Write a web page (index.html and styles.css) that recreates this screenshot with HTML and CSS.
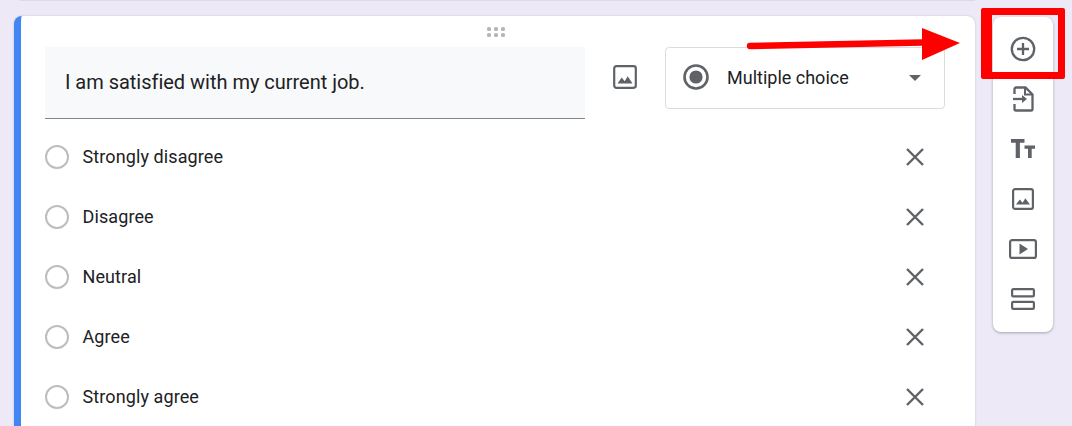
FILE: index.html
```html
<!DOCTYPE html>
<html lang="en">
<head>
<meta charset="utf-8">
<title>Form editor</title>
<link rel="stylesheet" href="styles.css">
</head>
<body>
<div class="prev-card"></div>
<main class="editor">
  <section class="card">
    <div class="drag">
      <svg width="20" height="12" viewBox="0 0 20 12"><g fill="#b4b6b9"><rect x="1" y="1" width="4" height="4" rx="1.5"/><rect x="8" y="1" width="4" height="4" rx="1.5"/><rect x="15" y="1" width="4" height="4" rx="1.5"/><rect x="1" y="7" width="4" height="4" rx="1.5"/><rect x="8" y="7" width="4" height="4" rx="1.5"/><rect x="15" y="7" width="4" height="4" rx="1.5"/></g></svg>
    </div>
    <div class="head">
      <div class="question">I am satisfied with my current job.</div>
      <div class="q-image">
        <svg width="24" height="24" viewBox="0 0 24 24"><rect x="1.2" y="1.2" width="21.6" height="21.6" rx="2.2" fill="none" stroke="#5f6368" stroke-width="2.2"/><path d="M4.500 18.500l4.200-6 3 3.700 3-5 4.800 7.300z" fill="#5f6368"/></svg>
      </div>
      <div class="type">
        <svg class="type-radio" width="26" height="26" viewBox="0 0 26 26"><circle cx="13" cy="13" r="11.5" fill="none" stroke="#5f6368" stroke-width="2.6"/><circle cx="13" cy="13" r="6.6" fill="#5f6368"/></svg>
        <span class="type-label">Multiple choice</span>
        <span class="caret"></span>
      </div>
    </div>
    <ul class="options">
      <li class="option"><span class="radio"></span><span class="label">Strongly disagree</span><svg class="close" width="20" height="20" viewBox="0 0 20 20"><path d="M2 2l16 16M18 2L2 18" stroke="#5f6368" stroke-width="2.4" fill="none"/></svg></li>
      <li class="option"><span class="radio"></span><span class="label">Disagree</span><svg class="close" width="20" height="20" viewBox="0 0 20 20"><path d="M2 2l16 16M18 2L2 18" stroke="#5f6368" stroke-width="2.4" fill="none"/></svg></li>
      <li class="option"><span class="radio"></span><span class="label">Neutral</span><svg class="close" width="20" height="20" viewBox="0 0 20 20"><path d="M2 2l16 16M18 2L2 18" stroke="#5f6368" stroke-width="2.4" fill="none"/></svg></li>
      <li class="option"><span class="radio"></span><span class="label">Agree</span><svg class="close" width="20" height="20" viewBox="0 0 20 20"><path d="M2 2l16 16M18 2L2 18" stroke="#5f6368" stroke-width="2.4" fill="none"/></svg></li>
      <li class="option"><span class="radio"></span><span class="label">Strongly agree</span><svg class="close" width="20" height="20" viewBox="0 0 20 20"><path d="M2 2l16 16M18 2L2 18" stroke="#5f6368" stroke-width="2.4" fill="none"/></svg></li>
    </ul>
  </section>
  <aside class="toolbar">
    <div class="tool"><svg width="26" height="26" viewBox="0 0 26 26"><circle cx="13" cy="13" r="11.2" fill="none" stroke="#5f6368" stroke-width="2.3"/><path d="M13 7v12M7 13h12" stroke="#5f6368" stroke-width="2.3" fill="none"/></svg></div>
    <div class="tool"><svg width="26" height="26" viewBox="0 0 26 26"><path d="M4.500 8V3a1.500 1.500 0 0 1 1.500-1.500h9.500l7 7V23a1.500 1.500 0 0 1-1.500 1.500H6A1.500 1.500 0 0 1 4.500 23v-5" fill="none" stroke="#5f6368" stroke-width="2.300"/><path d="M15 2v6.500h7" fill="none" stroke="#5f6368" stroke-width="2"/><path d="M3 13h10" stroke="#5f6368" stroke-width="2.300" fill="none"/><path d="M12 9l5 4-5 4z" fill="#5f6368"/></svg></div>
    <div class="tool"><svg width="26" height="26" viewBox="0 0 26 26"><path d="M1 3h13.500v3.800h-4.600V22H5.700V6.800H1zM14.500 9.500H25v3.300h-3.300V22h-3.700v-9.200h-3.500z" fill="#5f6368"/></svg></div>
    <div class="tool"><svg width="24" height="24" viewBox="0 0 24 24"><rect x="2.100" y="2.100" width="19.800" height="19.800" rx="2" fill="none" stroke="#5f6368" stroke-width="2.200"/><path d="M5 17.500l3.800-5.100 2.800 3.400 2.700-4.600 4.700 6.300z" fill="#5f6368"/></svg></div>
    <div class="tool"><svg width="28" height="22" viewBox="0 0 28 22"><rect x="1.100" y="2.100" width="25.800" height="17.800" rx="2" fill="none" stroke="#5f6368" stroke-width="2.200"/><path d="M10.500 5.500l8.500 5.500-8.500 5.500z" fill="#5f6368"/></svg></div>
    <div class="tool"><svg width="24" height="24" viewBox="0 0 24 24"><rect x="1.100" y="2.100" width="21.800" height="7.300" rx="1.200" fill="none" stroke="#5f6368" stroke-width="2.200"/><rect x="1.100" y="14.800" width="21.800" height="7.100" rx="1.200" fill="none" stroke="#5f6368" stroke-width="2.200"/></svg></div>
  </aside>
</main>
<div class="highlight"></div>
<svg class="arrow" width="220" height="40" viewBox="0 0 220 40"><path d="M5 18L178 14.500" stroke="#ff0000" stroke-width="6.400" stroke-linecap="round" fill="none"/><path d="M177 0l38 15-38 17z" fill="#ff0000"/></svg>
</body>
</html>
```

FILE: styles.css
```css
* { box-sizing: border-box; }
html, body { margin: 0; height: 426px; overflow: hidden; }
body {
  background: #ede9f7;
  font-family: Roboto, "Liberation Sans", sans-serif;
  color: #202124;
  position: relative;
}
.prev-card {
  height: 1px;
  margin: 0 97px 0 20px;
  background: #dadce0;
}
.editor {
  display: flex;
  align-items: flex-start;
  gap: 18px;
  padding: 15px 0 0 14px;
  height: 425px;
  overflow: hidden;
}
.card {
  width: 961px;
  height: 440px;
  background: #fff;
  border-radius: 8px;
  border-left: 7px solid #4285f4;
  box-shadow: 0 0 2px rgba(0, 0, 0, .22);
  padding: 31px 30px 0 24px;
  position: relative;
}
.drag { position: absolute; top: 10px; left: 464.500px; line-height: 0; }
.head { display: flex; align-items: flex-start; }
.question {
  width: 540px;
  height: 72px;
  padding: 0 20px;
  display: flex;
  align-items: center;
  background: #f8f9fa;
  border-bottom: 1px solid #80868b;
  font-size: 20px;
  letter-spacing: -.02px;
  padding-bottom: 2px;
}
.q-image { margin: 18px 0 0 28px; line-height: 0; }
.type {
  margin-left: 28px;
  width: 280px;
  height: 62px;
  border: 1px solid #dadce0;
  border-radius: 4px;
  display: flex;
  align-items: center;
  padding: 0 23px 0 17px;
}
.type-radio { flex: none; margin-bottom: 2px; }
.type-label { margin-left: 18px; flex: 1; font-size: 18px; margin-bottom: 2px; }
.caret {
  width: 0;
  height: 0;
  border-left: 6px solid transparent;
  border-right: 6px solid transparent;
  border-top: 6px solid #5f6368;
}
.options { list-style: none; margin: 8px 0 0; padding: 0; }
.option { height: 60px; display: flex; align-items: center; }
.radio {
  width: 24px;
  height: 24px;
  border: 2px solid #bdbdbd;
  border-radius: 50%;
  flex: none;
}
.label { margin-left: 13.500px; flex: 1; font-size: 18px; letter-spacing: .1px; margin-bottom: 2px; }
.close { flex: none; margin-right: 20px; }
.toolbar {
  width: 60px;
  height: 315px;
  margin-top: 1px;
  padding: 7px 0;
  background: #fff;
  border-radius: 8px;
  box-shadow: 0 1px 3px rgba(0, 0, 0, .3);
  display: flex;
  flex-direction: column;
}
.tool { height: 50px; flex: none; display: flex; align-items: center; justify-content: center; }
.highlight {
  position: absolute;
  left: 981px;
  top: 8px;
  width: 84px;
  height: 71px;
  border: 7px solid #ff0000;
  border-left-width: 11px;
  border-radius: 2px;
}
.arrow { position: absolute; left: 745px; top: 28px; }
```
